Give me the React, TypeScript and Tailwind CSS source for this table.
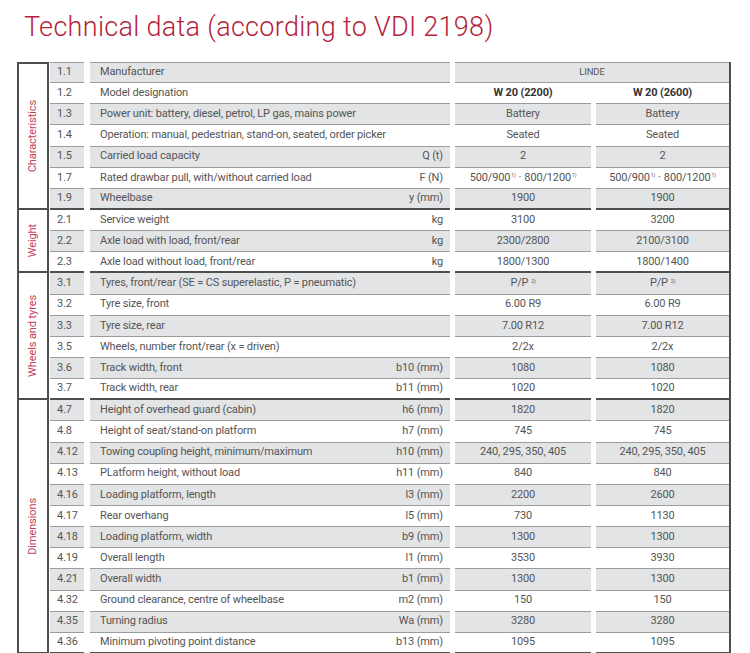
import React from 'react';

type Row = {
  no: string;
  label: string;
  unit?: string;
  a: React.ReactNode;
  b?: React.ReactNode;
  span?: boolean;
  bold?: boolean;
};

type Section = { title: string; rows: Row[] };

const drawbar = (
  <>
    500/900<sup className="ml-[1px] text-[5px] align-[4px]">1)</sup>
    <span className="mx-[3px]">·</span>800/1200<sup className="ml-[1px] text-[5px] align-[4px]">1)</sup>
  </>
);

const tyres = (
  <>
    P/P<sup className="ml-[3px] text-[5px] align-[4px]">2)</sup>
  </>
);

const sections: Section[] = [
  {
    title: 'Characteristics',
    rows: [
      { no: '1.1', label: 'Manufacturer', a: 'LINDE', span: true },
      { no: '1.2', label: 'Model designation', a: 'W 20 (2200)', b: 'W 20 (2600)', bold: true },
      { no: '1.3', label: 'Power unit: battery, diesel, petrol, LP gas, mains power', a: 'Battery', b: 'Battery' },
      { no: '1.4', label: 'Operation: manual, pedestrian, stand-on, seated, order picker', a: 'Seated', b: 'Seated' },
      { no: '1.5', label: 'Carried load capacity', unit: 'Q (t)', a: '2', b: '2' },
      { no: '1.7', label: 'Rated drawbar pull, with/without carried load', unit: 'F (N)', a: drawbar, b: drawbar },
      { no: '1.9', label: 'Wheelbase', unit: 'y (mm)', a: '1900', b: '1900' },
    ],
  },
  {
    title: 'Weight',
    rows: [
      { no: '2.1', label: 'Service weight', unit: 'kg', a: '3100', b: '3200' },
      { no: '2.2', label: 'Axle load with load, front/rear', unit: 'kg', a: '2300/2800', b: '2100/3100' },
      { no: '2.3', label: 'Axle load without load, front/rear', unit: 'kg', a: '1800/1300', b: '1800/1400' },
    ],
  },
  {
    title: 'Wheels and tyres',
    rows: [
      { no: '3.1', label: 'Tyres, front/rear (SE = CS superelastic, P = pneumatic)', a: tyres, b: tyres },
      { no: '3.2', label: 'Tyre size, front', a: '6.00 R9', b: '6.00 R9' },
      { no: '3.3', label: 'Tyre size, rear', a: '7.00 R12', b: '7.00 R12' },
      { no: '3.5', label: 'Wheels, number front/rear (x = driven)', a: '2/2x', b: '2/2x' },
      { no: '3.6', label: 'Track width, front', unit: 'b10 (mm)', a: '1080', b: '1080' },
      { no: '3.7', label: 'Track width, rear', unit: 'b11 (mm)', a: '1020', b: '1020' },
    ],
  },
  {
    title: 'Dimensions',
    rows: [
      { no: '4.7', label: 'Height of overhead guard (cabin)', unit: 'h6 (mm)', a: '1820', b: '1820' },
      { no: '4.8', label: 'Height of seat/stand-on platform', unit: 'h7 (mm)', a: '745', b: '745' },
      { no: '4.12', label: 'Towing coupling height, minimum/maximum', unit: 'h10 (mm)', a: '240, 295, 350, 405', b: '240, 295, 350, 405' },
      { no: '4.13', label: 'PLatform height, without load', unit: 'h11 (mm)', a: '840', b: '840' },
      { no: '4.16', label: 'Loading platform, length', unit: 'l3 (mm)', a: '2200', b: '2600' },
      { no: '4.17', label: 'Rear overhang', unit: 'l5 (mm)', a: '730', b: '1130' },
      { no: '4.18', label: 'Loading platform, width', unit: 'b9 (mm)', a: '1300', b: '1300' },
      { no: '4.19', label: 'Overall length', unit: 'l1 (mm)', a: '3530', b: '3930' },
      { no: '4.21', label: 'Overall width', unit: 'b1 (mm)', a: '1300', b: '1300' },
      { no: '4.32', label: 'Ground clearance, centre of wheelbase', unit: 'm2 (mm)', a: '150', b: '150' },
      { no: '4.35', label: 'Turning radius', unit: 'Wa (mm)', a: '3280', b: '3280' },
      { no: '4.36', label: 'Minimum pivoting point distance', unit: 'b13 (mm)', a: '1095', b: '1095' },
    ],
  },
];

function cell(gray: boolean, last: boolean, first: boolean) {
  return [
    'h-[21.15px] flex items-center',
    gray ? 'bg-[#e3e4e5]' : 'bg-white',
    last ? 'border-b-2 border-[#4f4f4f]' : 'border-b border-[#9c9c9c]',
    first ? 'border-t border-t-[#9c9c9c]' : '',
  ].join(' ');
}

export default function App() {
  let idx = 0;
  return (
    <div className="w-[750px] h-[653px] overflow-hidden bg-white font-['Roboto',sans-serif] text-[#555]">
      <div className="h-[62px] pl-[24px] pt-[9px]">
        <h1 className="text-[27px] leading-[36px] font-light text-[#b61f3c] tracking-[0.3px]">
          Technical data (according to VDI 2198)
        </h1>
      </div>

      <div className="ml-[17px] w-[714px] border-l-2 border-r-2 border-[#4f4f4f]">
        {sections.map((sec, si) => (
          <div key={sec.title} className="flex">
            <div
              className={
                'w-[30px] shrink-0 border-r-2 border-b-2 border-[#4f4f4f] flex items-center justify-center ' +
                (si === 0 ? 'border-t-2' : '')
              }
            >
              <span className="[writing-mode:vertical-rl] rotate-180 text-[11px] text-[#c4405a] tracking-[-0.1px]">
                {sec.title}
              </span>
            </div>
            <div className="flex-1">
              {sec.rows.map((r, ri) => {
                const gray = idx % 2 === 0;
                const first = idx === 0;
                idx++;
                const last = ri === sec.rows.length - 1;
                const c = cell(gray, last, first);
                const val = 'ml-[5px] justify-center whitespace-nowrap ' + c + (r.bold ? ' font-bold text-[#333] text-[11px]' : '');
                return (
                  <div key={r.no} className="flex text-[11px] tracking-[-0.15px]">
                    <div className={'ml-[1px] w-[34px] pl-[7px] ' + c}>{r.no}</div>
                    <div className={'ml-[6px] w-[360px] pl-[10px] pr-[7px] justify-between ' + c}>
                      <span className="whitespace-nowrap">{r.label}</span>
                      {r.unit && <span className="whitespace-nowrap">{r.unit}</span>}
                    </div>
                    {r.span ? (
                      <div className={'ml-[5px] w-[274px] justify-center text-[9.5px] ' + c}>{r.a}</div>
                    ) : (
                      <>
                        <div className={'w-[136px] ' + val}>{r.a}</div>
                        <div className={'w-[133px] ' + val}>{r.b}</div>
                      </>
                    )}
                  </div>
                );
              })}
            </div>
          </div>
        ))}
      </div>
    </div>
  );
}
